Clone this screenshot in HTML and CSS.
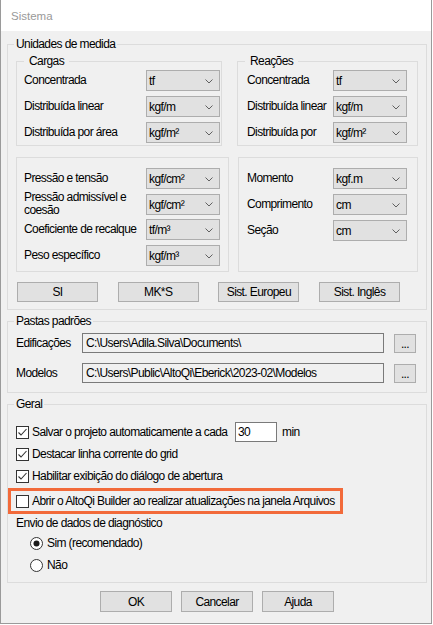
FILE: index.html
```html
<!DOCTYPE html>
<html lang="pt">
<head>
<meta charset="utf-8">
<title>Sistema</title>
<link rel="stylesheet" href="styles.css">
</head>
<body>
<div class="window">
  <div class="titlebar"><span class="title">Sistema</span></div>
  <div class="content">

    <fieldset class="group units">
      <legend class="legend">Unidades de medida</legend>

      <div class="units-row top-row">
        <fieldset class="group sub cargas">
          <legend class="legend sub-legend">Cargas</legend>
          <div class="form-grid">
            <span class="lbl">Concentrada</span>
            <div class="combo"><span>tf</span><svg class="chev" width="8" height="5" viewBox="0 0 8 5"><polyline points="0.5,0.5 4,4 7.5,0.5" fill="none" stroke="#606060"/></svg></div>
            <span class="lbl">Distribuída linear</span>
            <div class="combo"><span>kgf/m</span><svg class="chev" width="8" height="5" viewBox="0 0 8 5"><polyline points="0.5,0.5 4,4 7.5,0.5" fill="none" stroke="#606060"/></svg></div>
            <span class="lbl">Distribuída por área</span>
            <div class="combo"><span>kgf/m²</span><svg class="chev" width="8" height="5" viewBox="0 0 8 5"><polyline points="0.5,0.5 4,4 7.5,0.5" fill="none" stroke="#606060"/></svg></div>
          </div>
        </fieldset>

        <fieldset class="group sub reacoes">
          <legend class="legend sub-legend shift">Reações</legend>
          <div class="form-grid">
            <span class="lbl">Concentrada</span>
            <div class="combo"><span>tf</span><svg class="chev" width="8" height="5" viewBox="0 0 8 5"><polyline points="0.5,0.5 4,4 7.5,0.5" fill="none" stroke="#606060"/></svg></div>
            <span class="lbl">Distribuída linear</span>
            <div class="combo"><span>kgf/m</span><svg class="chev" width="8" height="5" viewBox="0 0 8 5"><polyline points="0.5,0.5 4,4 7.5,0.5" fill="none" stroke="#606060"/></svg></div>
            <span class="lbl">Distribuída por</span>
            <div class="combo"><span>kgf/m²</span><svg class="chev" width="8" height="5" viewBox="0 0 8 5"><polyline points="0.5,0.5 4,4 7.5,0.5" fill="none" stroke="#606060"/></svg></div>
          </div>
        </fieldset>
      </div>

      <div class="units-row mid-row">
        <div class="box pressure">
          <div class="form-grid tight">
            <span class="lbl">Pressão e tensão</span>
            <div class="combo"><span>kgf/cm²</span><svg class="chev" width="8" height="5" viewBox="0 0 8 5"><polyline points="0.5,0.5 4,4 7.5,0.5" fill="none" stroke="#606060"/></svg></div>
            <span class="lbl two-line">Pressão admissível e coesão</span>
            <div class="combo"><span>kgf/cm²</span><svg class="chev" width="8" height="5" viewBox="0 0 8 5"><polyline points="0.5,0.5 4,4 7.5,0.5" fill="none" stroke="#606060"/></svg></div>
            <span class="lbl">Coeficiente de recalque</span>
            <div class="combo"><span>tf/m³</span><svg class="chev" width="8" height="5" viewBox="0 0 8 5"><polyline points="0.5,0.5 4,4 7.5,0.5" fill="none" stroke="#606060"/></svg></div>
            <span class="lbl">Peso específico</span>
            <div class="combo"><span>kgf/m³</span><svg class="chev" width="8" height="5" viewBox="0 0 8 5"><polyline points="0.5,0.5 4,4 7.5,0.5" fill="none" stroke="#606060"/></svg></div>
          </div>
        </div>
        <div class="box moment">
          <div class="form-grid loose">
            <span class="lbl">Momento</span>
            <div class="combo"><span>kgf.m</span><svg class="chev" width="8" height="5" viewBox="0 0 8 5"><polyline points="0.5,0.5 4,4 7.5,0.5" fill="none" stroke="#606060"/></svg></div>
            <span class="lbl">Comprimento</span>
            <div class="combo"><span>cm</span><svg class="chev" width="8" height="5" viewBox="0 0 8 5"><polyline points="0.5,0.5 4,4 7.5,0.5" fill="none" stroke="#606060"/></svg></div>
            <span class="lbl">Seção</span>
            <div class="combo"><span>cm</span><svg class="chev" width="8" height="5" viewBox="0 0 8 5"><polyline points="0.5,0.5 4,4 7.5,0.5" fill="none" stroke="#606060"/></svg></div>
          </div>
        </div>
      </div>

      <div class="units-buttons">
        <button class="btn unit-btn">SI</button>
        <button class="btn unit-btn">MK*S</button>
        <button class="btn unit-btn">Sist. Europeu</button>
        <button class="btn unit-btn">Sist. Inglês</button>
      </div>
    </fieldset>

    <fieldset class="group paths">
      <legend class="legend">Pastas padrões</legend>
      <div class="path-grid">
        <span class="lbl">Edificações</span>
        <div class="path-input">C:\Users\Adila.Silva\Documents\</div>
        <button class="btn browse">...</button>
        <span class="lbl">Modelos</span>
        <div class="path-input">C:\Users\Public\AltoQi\Eberick\2023-02\Modelos</div>
        <button class="btn browse">...</button>
      </div>
    </fieldset>

    <fieldset class="group general">
      <legend class="legend">Geral</legend>
      <div class="chk-row">
        <svg class="box-icon" width="13" height="13" viewBox="0 0 13 13"><rect x="0.5" y="0.5" width="12" height="12" fill="#fff" stroke="#333"/><polyline points="2.5,6.5 5,9 10.5,3" fill="none" stroke="#333" stroke-width="1.1"/></svg>
        <span class="chk-text autosave">Salvar o projeto automaticamente a cada</span>
        <div class="num-input">30</div>
        <span class="unit">min</span>
      </div>
      <div class="chk-row">
        <svg class="box-icon" width="13" height="13" viewBox="0 0 13 13"><rect x="0.5" y="0.5" width="12" height="12" fill="#fff" stroke="#333"/><polyline points="2.5,6.5 5,9 10.5,3" fill="none" stroke="#333" stroke-width="1.1"/></svg>
        <span class="chk-text">Destacar linha corrente do grid</span>
      </div>
      <div class="chk-row">
        <svg class="box-icon" width="13" height="13" viewBox="0 0 13 13"><rect x="0.5" y="0.5" width="12" height="12" fill="#fff" stroke="#333"/><polyline points="2.5,6.5 5,9 10.5,3" fill="none" stroke="#333" stroke-width="1.1"/></svg>
        <span class="chk-text">Habilitar exibição do diálogo de abertura</span>
      </div>
      <div class="chk-row highlight">
        <svg class="box-icon" width="13" height="13" viewBox="0 0 13 13"><rect x="0.5" y="0.5" width="12" height="12" fill="#fff" stroke="#333"/></svg>
        <span class="chk-text">Abrir o AltoQi Builder ao realizar atualizações na janela Arquivos</span>
      </div>
      <div class="diag-label">Envio de dados de diagnóstico</div>
      <div class="radio-row">
        <svg class="radio-icon" width="13" height="13" viewBox="0 0 13 13"><circle cx="6.5" cy="6.5" r="6" fill="#fff" stroke="#333"/><circle cx="6.5" cy="6.5" r="3" fill="#1a1a1a"/></svg>
        <span class="radio-text">Sim (recomendado)</span>
      </div>
      <div class="radio-row">
        <svg class="radio-icon" width="13" height="13" viewBox="0 0 13 13"><circle cx="6.5" cy="6.5" r="6" fill="#fff" stroke="#333"/></svg>
        <span class="radio-text">Não</span>
      </div>
    </fieldset>

    <div class="dialog-buttons">
      <button class="btn dlg-btn">OK</button>
      <button class="btn dlg-btn">Cancelar</button>
      <button class="btn dlg-btn">Ajuda</button>
    </div>
  </div>
</div>
</body>
</html>
```

FILE: styles.css
```css
* { box-sizing: border-box; }

html, body {
  margin: 0;
  padding: 0;
  background: #ffffff;
}

body {
  font-family: "Liberation Sans", Arial, sans-serif;
  font-size: 12px;
  letter-spacing: -0.6px;
  color: #000;
}

.window {
  width: 432px;
  height: 624px;
  border: 1px solid #9a9a9a;
  border-top: none;
  background: #f0f0f0;
  display: flex;
  flex-direction: column;
}

.titlebar {
  height: 31px;
  flex-shrink: 0;
  background: #ffffff;
  display: flex;
  align-items: center;
  padding-left: 10px;
}

.title {
  font-family: "Liberation Sans", Arial, sans-serif;
  font-size: 11.5px;
  letter-spacing: 0;
  color: #999999;
}

.content {
  flex: 1;
  padding: 5px 4px 0 6px;
  display: flex;
  flex-direction: column;
}

/* group boxes */
.group {
  margin: 0;
  border: 1px solid #dcdcdc;
  min-width: 0;
}

.legend {
  height: 17px;
  line-height: 17px;
  padding: 0 2px;
  margin-left: -2px;
}

.sub-legend {
  padding: 0 5px;
  margin-left: 0;
}

.sub-legend.shift { margin-left: -2px; }

.units {
  padding: 0 8px 7px 8px;
}

.units-row { display: grid; }

.top-row {
  grid-template-columns: 206px 181px;
  column-gap: 15px;
}

.mid-row {
  grid-template-columns: 213px 180px;
  column-gap: 9px;
  margin-top: 11px;
}

.cargas { padding: 0 1px 2px 7px; }
.reacoes { padding: 0 10px 2px 9px; }

.box {
  border: 1px solid #dcdcdc;
  height: 115px;
}

.pressure { padding: 10px 8px 0 7px; }
.moment { padding: 10px 10px 0 8px; }

.form-grid {
  display: grid;
  grid-template-columns: 1fr 74px;
  grid-auto-rows: 21px;
  row-gap: 5px;
  align-items: center;
}

.form-grid.tight { row-gap: 4.7px; }
.form-grid.loose { row-gap: 5px; }

.lbl {
  line-height: 15px;
  white-space: nowrap;
}

.lbl.two-line {
  white-space: normal;
  line-height: 13px;
  padding-right: 10px;
}

.combo {
  height: 21px;
  background: #e1e1e1;
  border: 1px solid #adadad;
  display: flex;
  align-items: center;
  justify-content: space-between;
  padding: 1px 6px 0 2px;
}

.chev { display: block; }

/* buttons */
.btn {
  font-family: inherit;
  font-size: 12px;
  font-weight: normal;
  letter-spacing: -0.6px;
  color: #000;
  background: #e1e1e1;
  border: 1px solid #adadad;
  border-radius: 0;
  padding: 0;
  margin: 0;
}

.units-buttons {
  display: flex;
  gap: 19.7px;
  margin-top: 10px;
  padding-left: 1px;
}

.unit-btn {
  width: 81px;
  height: 20px;
}

/* paths */
.paths {
  margin-top: 3px;
  padding: 3px 10px 9px 8px;
}

.path-grid {
  display: grid;
  grid-template-columns: 66px 1fr 32px;
  grid-auto-rows: 20px;
  row-gap: 10px;
  align-items: center;
}

.path-input {
  height: 20px;
  border: 1px solid #7a7a7a;
  background: #f0f0f0;
  padding: 0 3px;
  line-height: 18px;
  white-space: nowrap;
  overflow: hidden;
}

.browse {
  justify-self: end;
  align-self: end;
  width: 22px;
  height: 19px;
  line-height: 19px;
}

/* general */
.general {
  margin-top: 3px;
  padding: 9px 8px 7px 8px;
}

.chk-row {
  display: flex;
  align-items: center;
  height: 20px;
  margin-bottom: 2px;
}

.box-icon, .radio-icon {
  display: block;
  flex-shrink: 0;
}

.chk-text {
  margin-left: 3px;
  white-space: nowrap;
}

.chk-text.autosave {
  width: 203px;
  flex-shrink: 0;
}

.num-input {
  width: 42px;
  height: 20px;
  background: #ffffff;
  border: 1px solid #7a7a7a;
  padding: 0 2px;
  line-height: 18px;
  flex-shrink: 0;
}

.unit { margin-left: 5px; }

.chk-row.highlight {
  height: 26px;
  width: 335px;
  margin-left: -8px;
  margin-bottom: 0;
  padding-left: 5px;
  border: 3px solid #f26a3a;
}

.diag-label {
  margin-top: 2px;
  line-height: 15px;
}

.radio-row {
  display: flex;
  align-items: center;
  height: 20px;
  margin-top: 2px;
  padding-left: 14px;
}

.radio-text { margin-left: 4px; }

.dialog-buttons {
  display: flex;
  justify-content: center;
  gap: 9px;
  margin-top: 8px;
}

.dlg-btn {
  width: 72px;
  height: 21px;
}
```
